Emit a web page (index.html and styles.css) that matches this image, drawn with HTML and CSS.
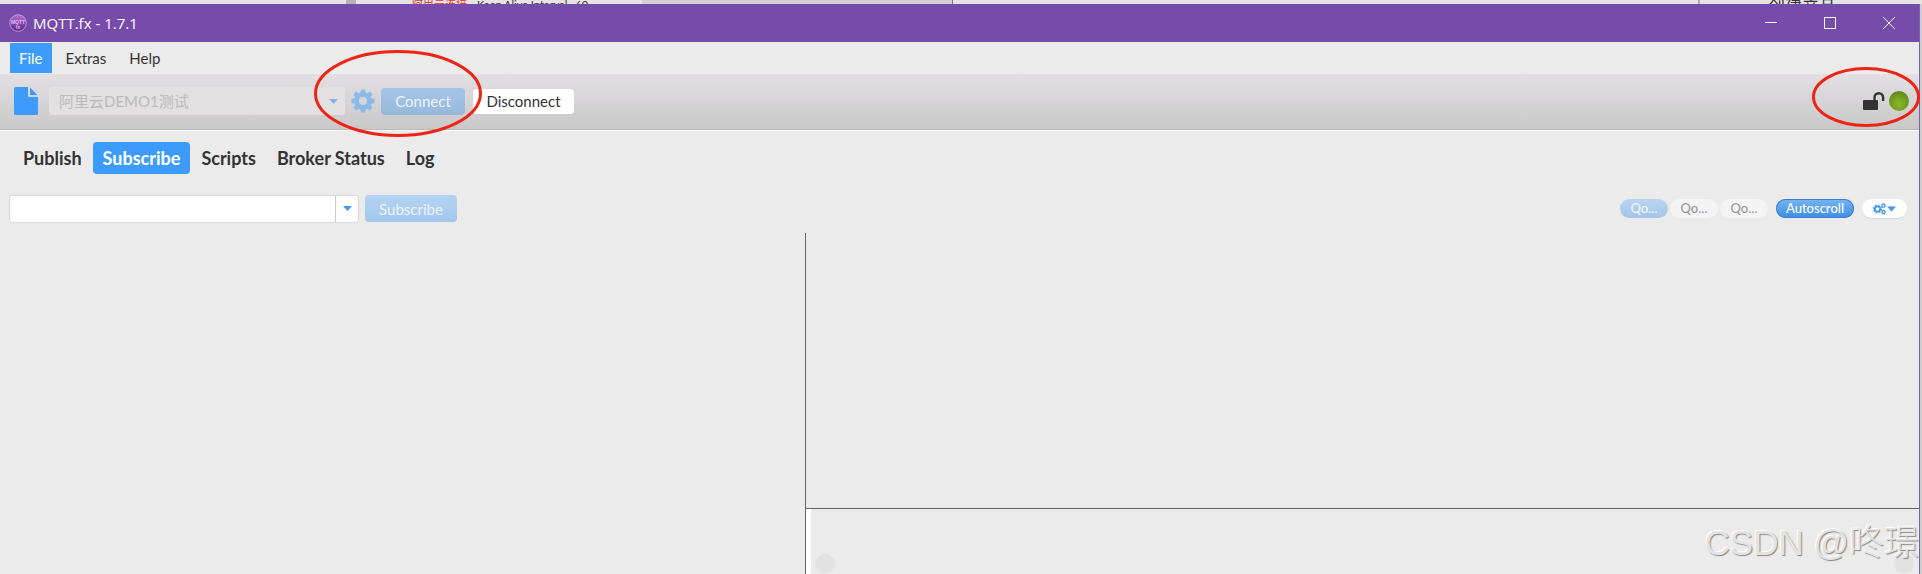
FILE: index.html
```html
<!DOCTYPE html>
<html lang="zh-Hans">
<head>
    <meta charset="UTF-8">
    <meta name="viewport" content="width=device-width, initial-scale=1.0">
    <title>MQTT.fx - 1.7.1</title>
    <link rel="stylesheet" href="styles.css">
</head>
<body>
    <!-- page behind the window -->
    <div class="backdrop">
        <span class="backdrop-panel">
            <span class="backdrop-error">阿里云连接</span>
            <span class="backdrop-label">Keep Alive Interval</span>
            <span class="backdrop-value">60</span>
        </span>
        <span class="backdrop-grey"></span>
        <span class="backdrop-right">创建产品</span>
    </div>

    <div class="window">
        <header class="titlebar">
            <svg class="app-icon" width="18" height="18" viewBox="0 0 18 18">
                <defs>
                    <linearGradient id="orb" x1="0" y1="0" x2="0" y2="1">
                        <stop offset="0" stop-color="#b56fd6"/>
                        <stop offset="1" stop-color="#5b2391"/>
                    </linearGradient>
                </defs>
                <circle cx="9" cy="9" r="8.3" fill="url(#orb)" stroke="#c9a6dc" stroke-width="0.8"/>
                <text x="9" y="10" text-anchor="middle">MQTT</text>
                <text x="9" y="15" text-anchor="middle">fx</text>
            </svg>
            <h1>MQTT.fx - 1.7.1</h1>
            <div class="window-buttons">
                <button type="button" aria-label="Minimize">
                    <svg width="12" height="12" viewBox="0 0 12 12"><path d="M0 5.5H12"/></svg>
                </button>
                <button type="button" aria-label="Maximize">
                    <svg width="12" height="12" viewBox="0 0 12 12"><path d="M.5 .5H11.5V11.5H.5Z"/></svg>
                </button>
                <button type="button" aria-label="Close">
                    <svg width="12" height="12" viewBox="0 0 12 12"><path d="M0 0L12 12M12 0L0 12"/></svg>
                </button>
            </div>
        </header>

        <nav class="menubar">
            <button type="button" class="active">File</button>
            <button type="button">Extras</button>
            <button type="button">Help</button>
        </nav>

        <div class="toolbar">
            <button type="button" class="icon-button" aria-label="New profile">
                <svg width="24" height="28" viewBox="0 0 24 28">
                    <path d="M1.5 0H14V8.500Q14 10 15.500 10H24V26.500Q24 28 22.500 28H1.500Q0 28 0 26.500V1.500Q0 0 1.500 0Z" fill="#3d9bfc"/>
                    <path d="M16 0.500L23.500 8H16Z" fill="#3d9bfc"/>
                </svg>
            </button>
            <div class="combo combo-profile">
                <select aria-label="Connection profile" disabled>
                    <option>阿里云DEMO1测试</option>
                </select>
                <svg class="arrow" width="9" height="5" viewBox="0 0 9 5"><path d="M0 0H9L4.500 5Z"/></svg>
            </div>
            <div class="connect-group">
                <button type="button" class="icon-button" aria-label="Edit profiles" disabled>
                    <svg width="24" height="24" viewBox="-12 -12 24 24">
                        <g fill="#8dbbe9">
                            <path fill-rule="evenodd" d="M0-9A9 9 0 1 1 0 9A9 9 0 1 1 0-9ZM0-4A4 4 0 1 0 0 4A4 4 0 1 0 0-4Z"/>
                            <path id="tooth" d="M-2.700-8L-2-11.600H2L2.700-8Z"/>
                            <use href="#tooth" transform="rotate(45)"/>
                            <use href="#tooth" transform="rotate(90)"/>
                            <use href="#tooth" transform="rotate(135)"/>
                            <use href="#tooth" transform="rotate(180)"/>
                            <use href="#tooth" transform="rotate(225)"/>
                            <use href="#tooth" transform="rotate(270)"/>
                            <use href="#tooth" transform="rotate(315)"/>
                        </g>
                    </svg>
                </button>
                <button type="button" class="primary connect" disabled>Connect</button>
                <svg class="ring ring-connect" width="168" height="87" viewBox="0 0 168 87"><ellipse cx="84" cy="43.500" rx="82.500" ry="42"/></svg>
            </div>
            <button type="button" class="disconnect">Disconnect</button>

            <div class="status">
                <svg width="22" height="18" viewBox="0 0 22 18">
                    <rect x="0" y="8" width="15" height="10" rx="1" fill="#333"/>
                    <path d="M11.500 8.500V5.500A4.300 4.300 0 0 1 20.100 5.500V9" fill="none" stroke="#333" stroke-width="2.400"/>
                </svg>
                <span class="led"></span>
                <svg class="ring ring-status" width="108" height="60" viewBox="0 0 108 60"><ellipse cx="54" cy="30" rx="52.500" ry="28.500"/></svg>
            </div>
        </div>

        <nav class="tabs">
            <button type="button">Publish</button>
            <button type="button" class="active">Subscribe</button>
            <button type="button">Scripts</button>
            <button type="button">Broker Status</button>
            <button type="button">Log</button>
        </nav>

        <div class="subscribe-bar">
            <div class="combo combo-topic">
                <input type="text" aria-label="Topic">
                <button type="button" aria-label="Show topics">
                    <svg class="arrow" width="9" height="5" viewBox="0 0 9 5"><path d="M0 0H9L4.500 5Z"/></svg>
                </button>
            </div>
            <button type="button" class="primary subscribe" disabled>Subscribe</button>

            <div class="options">
                <div class="qos">
                    <button type="button" class="pill selected" disabled>Qo...</button>
                    <button type="button" class="pill" disabled>Qo...</button>
                    <button type="button" class="pill" disabled>Qo...</button>
                </div>
                <button type="button" class="pill autoscroll">Autoscroll</button>
                <button type="button" class="pill settings" aria-label="Settings">
                    <svg width="23" height="12" viewBox="0 0 23 12">
                        <g fill="none" stroke="#4597ea">
                            <circle cx="4.500" cy="6" r="2.700" stroke-width="1.800"/>
                            <circle cx="4.500" cy="6" r="4" stroke-width="1.200" stroke-dasharray="1.600 1.540"/>
                            <circle cx="10.500" cy="2.700" r="1.500" stroke-width="1.200"/>
                            <circle cx="10.500" cy="2.700" r="2.300" stroke-width=".7" stroke-dasharray="1 .8"/>
                            <circle cx="10.500" cy="9.200" r="1.500" stroke-width="1.200"/>
                            <circle cx="10.500" cy="9.200" r="2.300" stroke-width=".7" stroke-dasharray="1 .8"/>
                        </g>
                        <path d="M14 3.500H23L18.500 8.500Z" fill="#4597ea"/>
                    </svg>
                </button>
            </div>
        </div>

        <main class="split">
            <section class="subscriptions"></section>
            <section class="messages">
                <div class="message-list"></div>
                <div class="message-detail">
                    <span class="knob"></span>
                    <span class="knob"></span>
                </div>
            </section>
        </main>
    </div>

    <div class="watermark">CSDN @咚璟</div>
</body>
</html>
```

FILE: styles.css
```css
* {
    box-sizing: border-box;
}
body {
    margin: 0;
    height: 100vh;
    display: flex;
    flex-direction: column;
    overflow: hidden;
    background: #cfccd2;
    color: #333;
    font-family: Lato, "Noto Sans CJK SC", sans-serif;
    font-size: 15px;
}
button,
input,
select {
    font: inherit;
    color: inherit;
    border: none;
    margin: 0;
    padding: 0;
    background: none;
}
svg {
    display: block;
}

/* strip of the page behind the window */
.backdrop {
    flex: none;
    display: flex;
    height: 4px;
    overflow: hidden;
    background: #e4e4e4;
    font-size: 11px;
    line-height: 10px;
}
.backdrop-panel {
    display: flex;
    gap: 8px;
    width: 296px;
    margin-left: 18%;
    padding-left: 56px;
    border-left: 10px solid #b5b5b5;
    white-space: nowrap;
}
.backdrop-error {
    color: #d33;
}
.backdrop-label {
    margin-left: 2px;
}
.backdrop-grey {
    width: 311px;
    background: #d2d2d2;
    border-right: 1px solid #777;
}
.backdrop-right {
    margin-left: auto;
    padding-left: 68px;
    padding-right: 86px;
    border-left: 2px solid #aaa;
    font-size: 17px;
    line-height: 14px;
}

.window {
    flex: 1;
    display: flex;
    flex-direction: column;
    margin-right: 2px;
    border-right: 1px solid #7a62a8;
    background: #ebebeb;
    min-height: 0;
}

.titlebar {
    flex: none;
    display: flex;
    align-items: center;
    height: 38px;
    padding-left: 9px;
    background: #774baa;
    color: #fff;
}
.titlebar h1 {
    margin: 0 0 0 6px;
    font: 15px "Open Sans", sans-serif;
}
.app-icon text {
    font: bold 5px "Liberation Sans", sans-serif;
    fill: #e0b8ea;
}
.window-buttons {
    display: flex;
    margin-left: auto;
    margin-right: 1px;
}
.window-buttons button {
    display: flex;
    align-items: center;
    justify-content: center;
    width: 59px;
    height: 38px;
}
.window-buttons path {
    fill: none;
    stroke: #fff;
}

.menubar {
    flex: none;
    display: flex;
    gap: 5px;
    height: 32px;
    padding: 1px 10px;
}
.menubar button {
    padding: 0 9px;
}
.menubar .active {
    background: #3d9bfc;
    color: #fff;
}

.toolbar {
    flex: none;
    display: flex;
    align-items: center;
    height: 57px;
    padding: 0 10px 2px 14px;
    background: linear-gradient(#e2e0e2, #c9c8c9);
    border-bottom: 1px solid #fafafa;
    box-shadow: inset 0 -1px #bbb;
}
.combo {
    display: flex;
    align-items: center;
    height: 28px;
    border-radius: 3px;
}
.arrow path {
    fill: #4597ea;
}
.combo-profile {
    width: 296px;
    margin-left: 11px;
    padding: 0 7px 0 10px;
    background: #e2e0e1;
}
.combo-profile select {
    flex: 1;
    appearance: none;
    color: #bbb;
    opacity: 1;
}
.combo-profile .arrow {
    opacity: .6;
}
.connect-group {
    position: relative;
    display: flex;
    align-items: center;
    gap: 6px;
    margin-left: 6px;
}
.primary {
    height: 27px;
    border-radius: 4px;
    color: #edf3fa;
}
.connect {
    width: 84px;
    background: linear-gradient(#a5c6e8, #96b8da);
}
.disconnect {
    width: 101px;
    height: 25px;
    margin-left: 8px;
    border-radius: 4px;
    background: #fff;
}
.status {
    position: relative;
    display: flex;
    align-items: center;
    gap: 4px;
    margin-left: auto;
}
.led {
    width: 20px;
    height: 20px;
    border-radius: 50%;
    background: radial-gradient(circle at 50% 65%, #8cb92a, #6f9c20 50%, #537a18);
}

/* hand-drawn marks */
.ring {
    position: absolute;
    z-index: 1;
    pointer-events: none;
}
.ring ellipse {
    fill: none;
    stroke: #ee2415;
    stroke-width: 3;
}
.ring-connect {
    left: -37px;
    top: -38px;
}
.ring-status {
    right: -11px;
    top: -24px;
}

.tabs {
    flex: none;
    display: flex;
    gap: 1px;
    height: 43px;
    padding: 11px 13px 0;
}
.tabs button {
    height: 32px;
    padding: 0 10px;
    border-radius: 4px;
    font-size: 18px;
    font-weight: bold;
}
.tabs .active {
    background: #3d9bfc;
    color: #fff;
}

.subscribe-bar {
    flex: none;
    display: flex;
    align-items: center;
    height: 59px;
    padding: 10px 12px 0 9px;
}
.combo-topic {
    width: 350px;
    border: 1px solid #d9d9d9;
    background: #fff;
}
.combo-topic input {
    flex: 1;
    min-width: 0;
    padding: 0 8px;
}
.combo-topic button {
    display: flex;
    align-items: center;
    justify-content: center;
    width: 23px;
    height: 26px;
    border-left: 1px solid #ccc;
}
.subscribe {
    width: 92px;
    margin-left: 6px;
    background: linear-gradient(#b5d3f1, #a3c8ee);
}
.options {
    display: flex;
    gap: 8px;
    margin-left: auto;
}
.qos {
    display: flex;
    gap: 2px;
}
.pill {
    width: 48px;
    height: 19px;
    border-radius: 10px;
    background: #f4f4f4;
    color: #999;
    font-size: 13px;
    font-weight: 500;
    line-height: 19px;
}
.pill.selected {
    background: linear-gradient(#bad5f1, #a4c5e8);
    color: #f0f5fb;
}
.pill.autoscroll {
    width: 78px;
    background: linear-gradient(#78b5f3, #3d8de3);
    box-shadow: inset 0 0 0 1px #3c80c9;
    color: #fff;
}
.pill.settings {
    display: flex;
    align-items: center;
    justify-content: center;
    width: 45px;
    background: #fff;
    box-shadow: 0 1px 1px #d5d5d5;
}

.split {
    flex: 1;
    display: grid;
    grid-template-columns: 805fr 1114fr;
    min-height: 0;
}
.messages {
    display: flex;
    flex-direction: column;
    border-left: 1px solid #666;
}
.message-list {
    flex: 1;
    border-bottom: 1px solid #666;
}
.message-detail {
    display: flex;
    justify-content: space-between;
    align-items: flex-end;
    height: 65px;
    padding: 0 5px 0 4px;
    border-left: 5px solid #fff;
}
.knob {
    width: 20px;
    height: 20px;
    border-radius: 50%;
    background: #e2e2e2;
}

.watermark {
    position: absolute;
    right: 3px;
    bottom: 9px;
    font: 35px "Liberation Sans", "Noto Sans CJK SC", sans-serif;
    font-weight: 300;
    color: #e3e3e3;
    text-shadow: 1px 1px 1px #888, -1px -1px 1px #fff;
}
```
